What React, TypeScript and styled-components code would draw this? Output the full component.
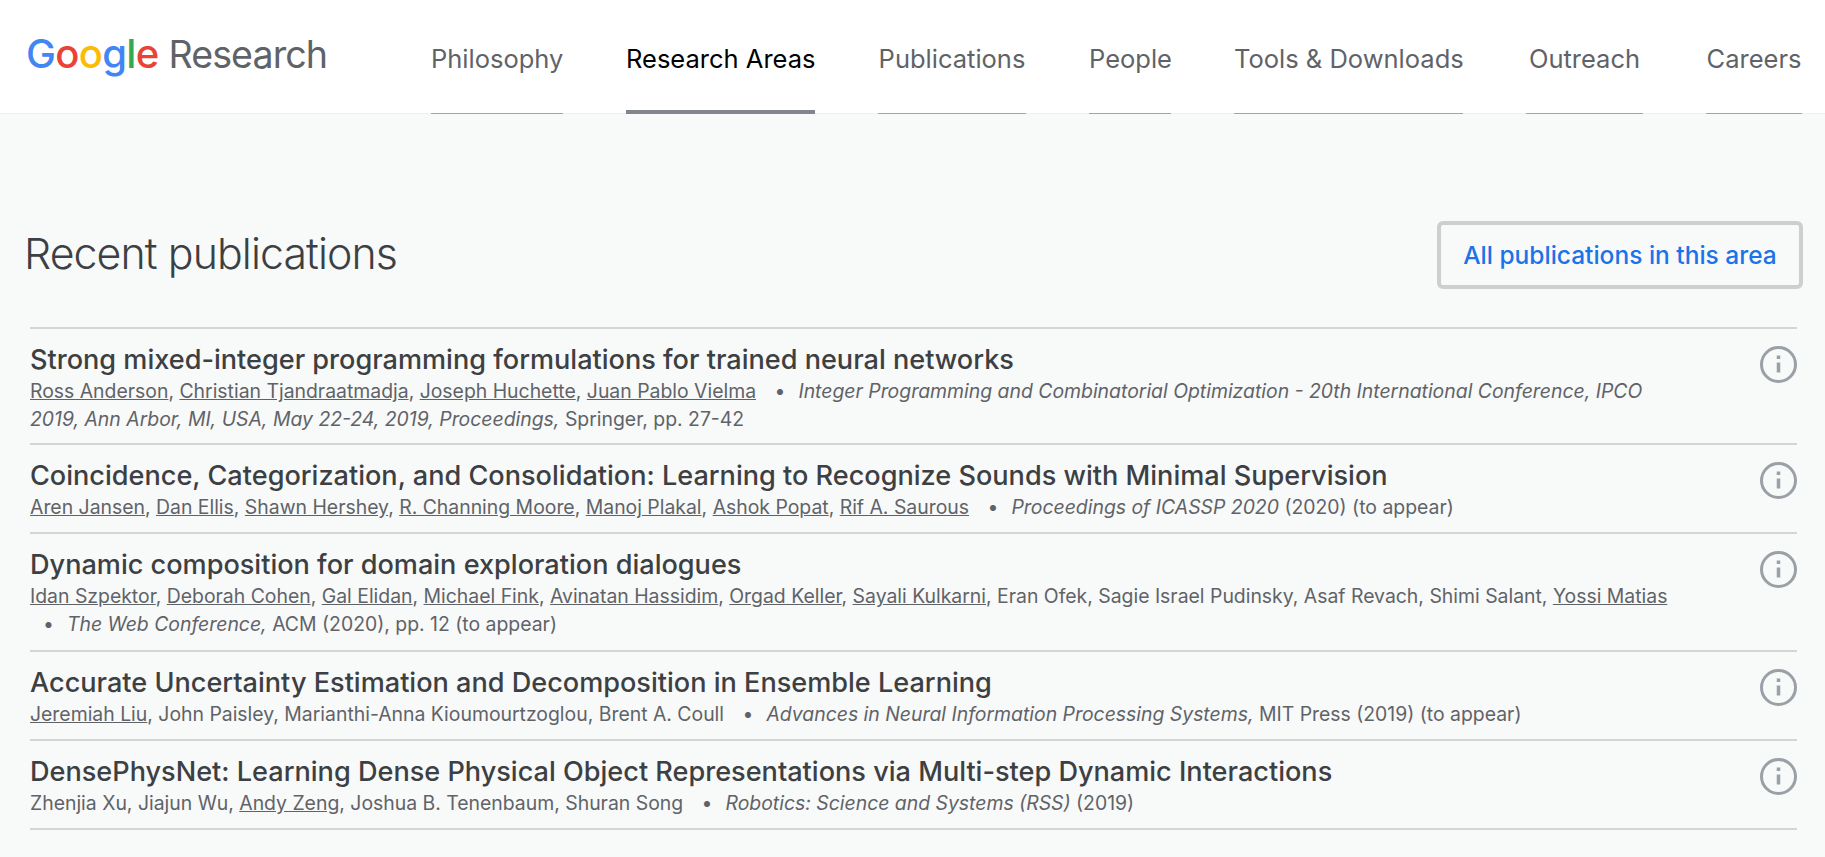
import React from 'react';
import styled, {createGlobalStyle} from 'styled-components';

const GlobalStyle = createGlobalStyle`
    html, body {
        margin: 0;
        padding: 0;
        background: #f8f9f9;
        font-family: "Inter", "Open Sans", sans-serif;
        overflow: hidden;
    }
`

const Header = styled.header`
    height: 114px;
    display: flex;
    align-items: stretch;
    background: #fff;
    box-shadow: inset 0 -1px 0 #eeefef;
`

const Brand = styled.div`
    width: 431px;
    flex: none;
    padding: 29px 0 0 26px;
    box-sizing: border-box;
    white-space: nowrap;
    font-size: 40px;
    line-height: 50px;
    letter-spacing: -0.7px;
`

const Letter = styled.span<{$c: string}>`
    color: ${p => p.$c};
    font-weight: 500;
`

const BrandName = styled.span`
    margin-left: 10px;
    font-size: 37.6px;
    color: #5f6368;
    letter-spacing: -0.9px;
`

const Nav = styled.nav`
    display: flex;
    gap: 63px;
`

const NavItem = styled.a<{$active?: boolean; $w: number}>`
    width: ${p => p.$w}px;
    height: 114px;
    box-sizing: border-box;
    padding-top: 42px;
    text-align: center;
    font-size: 25.5px;
    line-height: 34px;
    white-space: nowrap;
    color: ${p => p.$active ? '#000' : '#5f6368'};
    border-bottom: ${p => p.$active ? '4px solid #80868b' : '1px solid #7baaeb'};
`

const Main = styled.main`
    padding: 107px 28px 0 30px;
`

const TopRow = styled.div`
    display: flex;
    justify-content: space-between;
    align-items: center;
    margin-right: -6px;
    margin-left: -6px;
    height: 68px;
`

const Heading = styled.h2`
    margin: 0 0 4px 0;
    font-size: 42.8px;
    font-weight: 350;
    color: #3c4043;
    letter-spacing: -0.9px;
`

const AllButton = styled.a`
    width: 366px;
    height: 68px;
    box-sizing: border-box;
    display: flex;
    align-items: center;
    justify-content: center;
    border: 4px solid #ccced0;
    border-radius: 6px;
    color: #1a73e8;
    font-size: 24.5px;
    font-weight: 500;
    white-space: nowrap;
`

const List = styled.ul`
    list-style: none;
    margin: 38px 0 0 0;
    padding: 0;
    border-top: 2px solid #d2d4d6;
`

const Row = styled.li<{$h: number}>`
    display: flex;
    justify-content: space-between;
    padding: 14px 0 0 0;
    box-sizing: border-box;
    border-bottom: 2px solid #d2d4d6;
    height: ${p => p.$h}px;
`

const Body = styled.div`
    width: 1645px;
`

const Title = styled.div`
    font-size: 27.1px;
    line-height: 34px;
    font-weight: 500;
    color: #3c4043;
`

const Meta = styled.div`
    font-size: 19.4px;
    line-height: 28px;
    color: #5f6368;
`

const Author = styled.a`
    color: #5f6368;
    text-decoration: underline;
`

const Dot = styled.span`
    margin: 0 13px;
`

const InfoIcon = styled.svg`
    width: 37px;
    height: 37px;
    flex: none;
    margin-top: 3px;
`

function Info() {
    return (
        <InfoIcon viewBox="0 0 37 37" fill="none" stroke="#9aa0a6">
            <circle cx="18.5" cy="18.5" r="17" strokeWidth="3"/>
            <path d="M18.5 16.5v10" strokeWidth="3.5"/>
            <path d="M18.5 9.5v3.5" strokeWidth="3.5"/>
        </InfoIcon>
    );
}

const links = [
    {label: 'Philosophy', w: 132},
    {label: 'Research Areas', w: 189},
    {label: 'Publications', w: 148},
    {label: 'People', w: 82},
    {label: 'Tools & Downloads', w: 229},
    {label: 'Outreach', w: 117},
    {label: 'Careers', w: 96},
];

const authors = (names: string[]) => names.map((n, i) => (
    <React.Fragment key={n}>
        {n.startsWith('~') ? n.slice(1) : <Author>{n}</Author>}
        {i < names.length - 1 ? ', ' : ' '}
    </React.Fragment>
));

const pubs = [
    {
        h: 116,
        title: 'Strong mixed-integer programming formulations for trained neural networks',
        names: ['Ross Anderson', 'Christian Tjandraatmadja', 'Joseph Huchette', 'Juan Pablo Vielma'],
        venue: 'Integer Programming and Combinatorial Optimization - 20th International Conference, IPCO 2019, Ann Arbor, MI, USA, May 22-24, 2019, Proceedings,',
        rest: ' Springer, pp. 27-42',
    },
    {
        h: 89,
        title: 'Coincidence, Categorization, and Consolidation: Learning to Recognize Sounds with Minimal Supervision',
        names: ['Aren Jansen', 'Dan Ellis', 'Shawn Hershey', 'R. Channing Moore', 'Manoj Plakal', 'Ashok Popat', 'Rif A. Saurous'],
        venue: 'Proceedings of ICASSP 2020',
        rest: ' (2020) (to appear)',
    },
    {
        h: 118,
        title: 'Dynamic composition for domain exploration dialogues',
        names: ['Idan Szpektor', 'Deborah Cohen', 'Gal Elidan', 'Michael Fink', 'Avinatan Hassidim', 'Orgad Keller', 'Sayali Kulkarni', '~Eran Ofek', '~Sagie Israel Pudinsky', '~Asaf Revach', '~Shimi Salant', 'Yossi Matias'],
        venue: 'The Web Conference,',
        rest: ' ACM (2020), pp. 12 (to appear)',
    },
    {
        h: 89,
        title: 'Accurate Uncertainty Estimation and Decomposition in Ensemble Learning',
        names: ['Jeremiah Liu', '~John Paisley', '~Marianthi-Anna Kioumourtzoglou', '~Brent A. Coull'],
        venue: 'Advances in Neural Information Processing Systems,',
        rest: ' MIT Press (2019) (to appear)',
    },
    {
        h: 89,
        title: 'DensePhysNet: Learning Dense Physical Object Representations via Multi-step Dynamic Interactions',
        names: ['~Zhenjia Xu', '~Jiajun Wu', 'Andy Zeng', '~Joshua B. Tenenbaum', '~Shuran Song'],
        venue: 'Robotics: Science and Systems (RSS)',
        rest: ' (2019)',
    },
];

function App() {
    return (
        <>
            <GlobalStyle/>
            <Header>
                <Brand>
                    <Letter $c="#4285f4">G</Letter>
                    <Letter $c="#ea4335">o</Letter>
                    <Letter $c="#fbbc05">o</Letter>
                    <Letter $c="#4285f4">g</Letter>
                    <Letter $c="#34a853">l</Letter>
                    <Letter $c="#ea4335">e</Letter>
                    <BrandName>Research</BrandName>
                </Brand>
                <Nav>
                    {links.map(l => (
                        <NavItem key={l.label} $w={l.w} $active={l.label === 'Research Areas'}>{l.label}</NavItem>
                    ))}
                </Nav>
            </Header>
            <Main>
                <TopRow>
                    <Heading>Recent publications</Heading>
                    <AllButton>All publications in this area</AllButton>
                </TopRow>
                <List>
                    {pubs.map(p => (
                        <Row key={p.title} $h={p.h}>
                            <Body>
                                <Title>{p.title}</Title>
                                <Meta>
                                    {authors(p.names)}
                                    <Dot>•</Dot>
                                    <em>{p.venue}</em>{p.rest}
                                </Meta>
                            </Body>
                            <Info/>
                        </Row>
                    ))}
                </List>
            </Main>
        </>
    );
}

export default App;
